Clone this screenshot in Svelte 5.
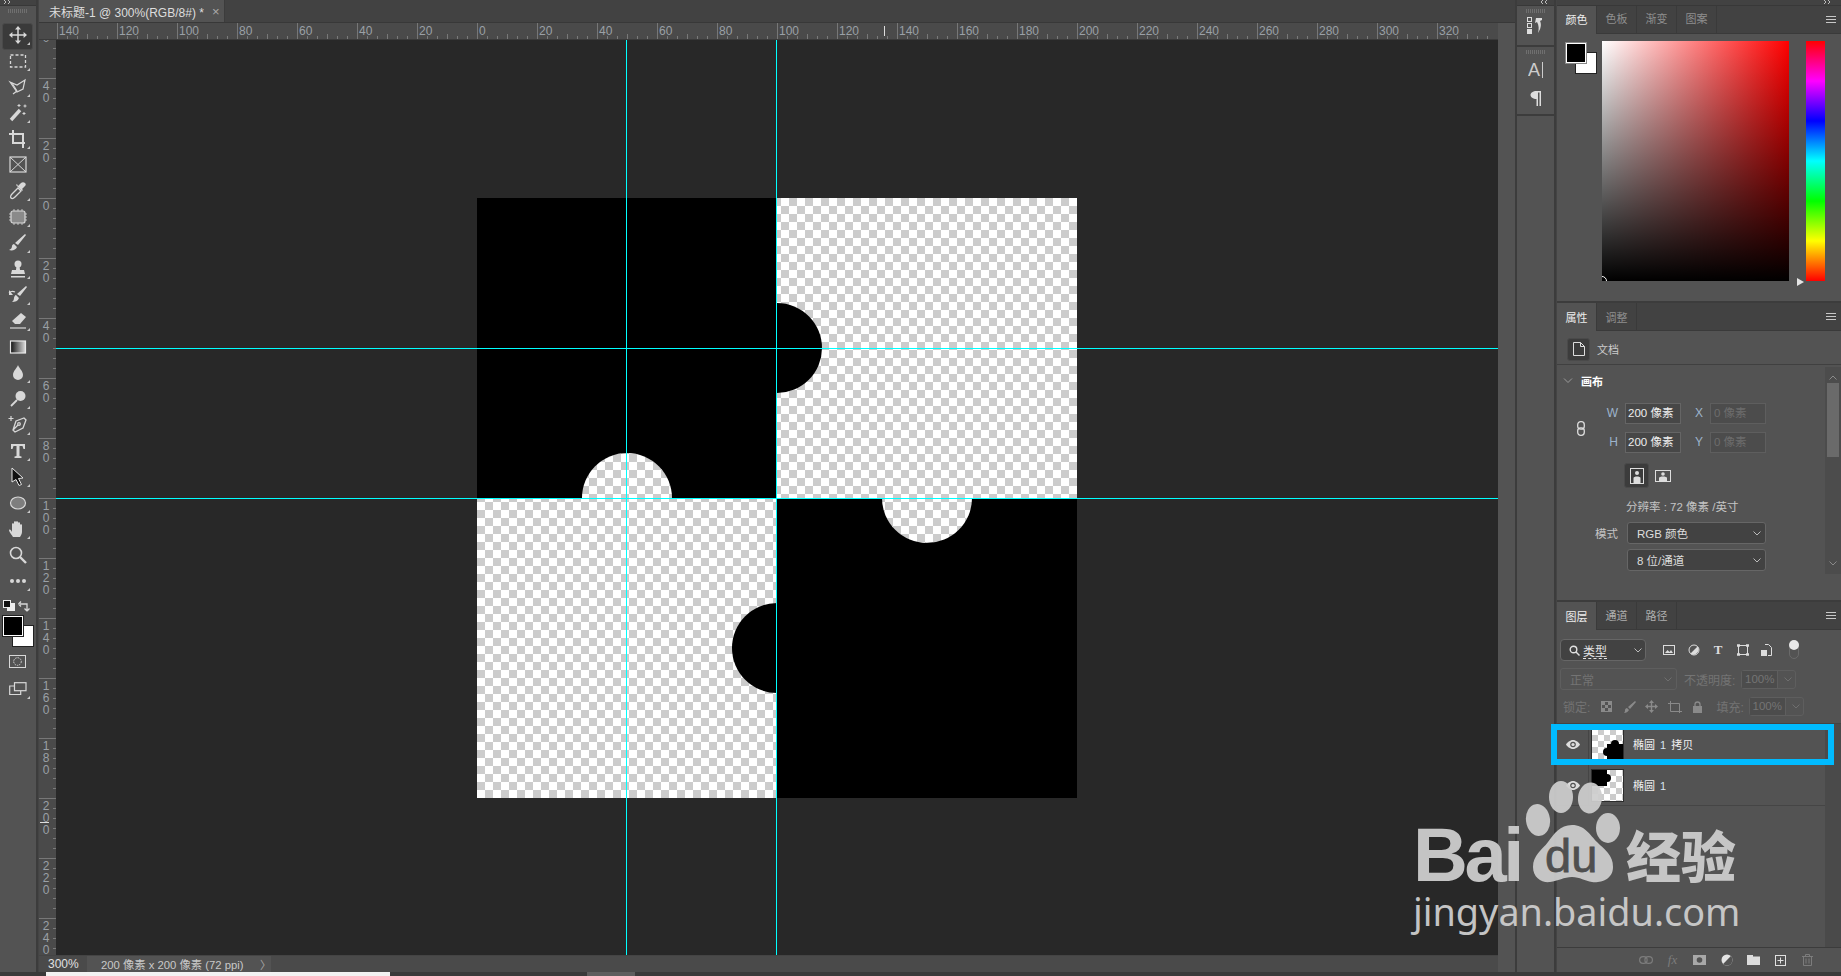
<script>
  const hLabels = [140,120,100,80,60,40,20,0,20,40,60,80,100,120,140,160,180,200,220,240,260,280,300,320];
  const vLabels = [60,40,20,0,20,40,60,80,100,120,140,160,180,200,220,240];
  const F = '#d8d8d8';
  const tools = [
    { active: true, tri: true, s: `<path d="M10 3v14M3 10h14" stroke-width="1.5"/><path fill="${F}" stroke="none" d="M10 1l3 3.4H7zM10 19l3-3.4H7zM1 10l3.4-3v6zM19 10l-3.4-3v6z"/>` },
    { tri: true, s: `<rect x="2.5" y="4" width="15" height="12" stroke-dasharray="3 2" stroke-width="1.3"/>` },
    { tri: true, s: `<path d="M2 5l7 3 8-5-2 9-6 3z" stroke-width="1.2"/><path d="M4 6l5 8-4 3" stroke-width="1.2"/>` },
    { tri: true, s: `<path d="M3 17l9-10" stroke-width="3.4"/><path stroke-width="1" d="M11 1v3M9.500 2.500h3M17 1.500v3M15.500 3h3M16 9v3M14.500 10.500h3"/>` },
    { tri: true, s: `<path d="M5 1v13h12M1 5h14v14" stroke-width="2"/>` },
    { tri: false, s: `<rect x="2" y="2" width="16" height="15" stroke-width="1.2"/><path d="M2 2l16 15M18 2L2 17" stroke-width="1"/>` },
    { tri: true, s: `<path d="M3 17c-1-1 0-3 1-4l6-6 3 3-6 6c-1 1-3 2-4 1z" stroke-width="1.300"/><path fill="${F}" stroke="none" d="M10 5l3-3c1-1 3-1 4 0s1 2 0 3l-3 3 1 1-1 1-6-6 1-1z"/>` },
    { tri: true, s: `<rect x="3" y="4" width="14" height="12" rx="2" fill="#8a8a8a" stroke-width="1.200"/><path stroke-width=".8" d="M6 2v2M10 2v2M14 2v2M6 16v2M10 16v2M14 16v2M1 7h2M1 10h2M1 13h2M17 7h2M17 10h2M17 13h2"/>` },
    { tri: true, s: `<path fill="${F}" stroke="none" d="M17 1l1 1-8 10-3-2zM6 11l3 3c-1 3-5 4-8 3 2-1 3-2 3-4 0-1 1-2 2-2z"/>` },
    { tri: true, s: `<circle cx="10" cy="5" r="3.500" fill="${F}" stroke="none"/><path fill="${F}" stroke="none" d="M8.500 7h3l.5 4h4l1 4H3l1-4h4zM3 17h14v1.500H3z"/>` },
    { tri: true, s: `<path fill="${F}" stroke="none" d="M18 1l1 1-7 9-3-2zM8 10l3 3c-1 3-4 4-7 4 1-1 2-2 2-4 0-1 1-3 2-3z"/><path stroke-width="1.200" d="M1 8c2-2 4-2 6-1"/><path fill="${F}" stroke="none" d="M1 5v5h4z"/>` },
    { tri: true, s: `<path fill="${F}" stroke="none" d="M13 2l5 4-6 7H7l-3-3z"/><path stroke-width="1.200" d="M2 17h16"/>` },
    { tri: false, s: `<defs><linearGradient id="tg"><stop offset="0" stop-color="#111"/><stop offset="1" stop-color="#ddd"/></linearGradient></defs><rect x="2.500" y="4" width="15" height="12" fill="url(#tg)" stroke="#e8e8e8" stroke-width="1.200"/>` },
    { tri: true, s: `<path fill="${F}" stroke="none" d="M10 2c1 3 5 6 5 10a5 5 0 0 1-10 0c0-4 4-7 5-10z"/>` },
    { tri: true, s: `<circle cx="12.500" cy="7" r="5" fill="${F}" stroke="none"/><path stroke-width="1.800" d="M9 11l-6 6"/>` },
    { tri: true, s: `<path stroke-width="1.300" d="M8 6l8-3 2 2-3 8-8 4-2-2zM5 15l5-5"/><circle cx="11" cy="9" r="1.300"/><path stroke-width="1.200" d="M3 1v5M0.500 3.500h5"/>` },
    { tri: true, s: `<path fill="${F}" stroke="none" d="M3 3h14v5h-1.500l-1-3H11.500v10l2 .5V17H6.500v-1.500l2-.5V5H5.500l-1 3H3z"/>` },
    { tri: true, s: `<path fill="#111" stroke="#e4e4e4" stroke-width="1" d="M4 1l11 10-4.500.5 3 6-2.500 1-3-6L4 15z"/>` },
    { tri: true, s: `<ellipse cx="10" cy="10" rx="7.500" ry="6" fill="#7e7e7e" stroke-width="1.200"/>` },
    { tri: true, s: `<path fill="${F}" stroke="none" d="M5 18c-1-2-4-5-4-7 1-1 2 0 3 2V5c0-1 2-1 2 0V3c0-1 2-1 2 0v0c0-1 2-1 2 0v1c0-1 2-1 2 0v2c0-1 2-1 2 0v7c0 2-1 3-2 5z"/>` },
    { tri: false, s: `<circle cx="8" cy="8" r="5.500" stroke-width="1.600"/><path stroke-width="2.400" d="M12 12l6 6"/>` },
    { tri: true, s: `<circle cx="4" cy="10" r="2" fill="${F}" stroke="none"/><circle cx="10" cy="10" r="2" fill="${F}" stroke="none"/><circle cx="16" cy="10" r="2" fill="${F}" stroke="none"/>` }
  ];
</script>

<div class="app">
  <div class="main">
    <aside class="tools">
      <div class="top-strip"><svg class="dbl" width="8" height="4" viewBox="0 0 8 4" fill="none" stroke="#bbb"><path d="M0 0l2 2-2 2M4 0l2 2-2 2"/></svg></div>
      <div class="grip tgrip"></div>
      <div class="toollist">
        {#each tools as t}
          <div class="tool" class:active={t.active} class:tri={t.tri}>
            <svg class="ico" width="20" height="20" viewBox="0 0 20 20">{@html t.s}</svg>
          </div>
        {/each}
      </div>
      <div class="mini">
        <svg width="13" height="11" viewBox="0 0 13 11"><rect x="4" y="3" width="8" height="8" fill="#eee"/><rect x="0.500" y="0.500" width="7" height="7" fill="#111" stroke="#eee"/></svg>
        <svg width="12" height="12" viewBox="0 0 12 12" fill="none" stroke="#d8d8d8" stroke-width="1.300"><path d="M2 4h7v6M0.500 4L3 1.500M0.500 4L3 6.500M9 11l-2.500-2.500M9 11l2.500-2.500"/></svg>
      </div>
      <div class="swatch tswatch"><i class="bg"></i><i class="fg"></i></div>
      <div class="tool qm">
        <svg width="18" height="14" viewBox="0 0 18 14" fill="none" stroke="#d8d8d8"><rect x="0.500" y="0.500" width="16" height="12"/><circle cx="8.500" cy="6.500" r="3.800" stroke-dasharray="1.500 1"/></svg>
      </div>
      <div class="tool tri">
        <svg width="18" height="14" viewBox="0 0 18 14" fill="none" stroke="#d8d8d8" stroke-width="1.200"><rect x="5.500" y="0.700" width="11.500" height="8"/><path d="M5.500 4H0.700v8.500h11V9"/></svg>
      </div>
    </aside>
    <div class="sep"></div>

    <section class="doc">
      <div class="tabbar">
        <div class="doctab"><span>未标题-1 @ 300%(RGB/8#) *</span><b>×</b></div>
      </div>
      <div class="hruler">
        <div class="corner"></div>
        {#each hLabels as l}<div class="hcell"><span>{l}</span></div>{/each}
        <i class="hmark"></i>
      </div>
      <div class="mid">
        <div class="vruler">
          <div class="vtrack">
            {#each vLabels as l, i}
              <div class="vcell">
                {#each String(l).split('') as d}<span>{d}</span>{/each}
                {#if l === 200}<i class="vmark"></i>{/if}
              </div>
            {/each}
          </div>
        </div>
        <div class="canvas">
          <svg class="art" width="600" height="600" viewBox="0 0 600 600">
            <defs>
              <pattern id="chk" width="16" height="16" patternUnits="userSpaceOnUse">
                <rect width="16" height="16" fill="#fff"/>
                <rect x="8" width="8" height="8" fill="#ccc"/>
                <rect y="8" width="8" height="8" fill="#ccc"/>
              </pattern>
              <clipPath id="tl"><rect width="300" height="300"/></clipPath>
              <clipPath id="br"><rect x="300" y="300" width="300" height="300"/></clipPath>
            </defs>
            <rect width="600" height="600" fill="url(#chk)"/>
            <rect width="300" height="300" fill="#000"/>
            <rect x="300" y="300" width="300" height="300" fill="#000"/>
            <circle cx="300" cy="150" r="45" fill="#000"/>
            <circle cx="300" cy="450" r="45" fill="#000"/>
            <circle cx="150" cy="300" r="45" fill="url(#chk)" clip-path="url(#tl)"/>
            <circle cx="450" cy="300" r="45" fill="url(#chk)" clip-path="url(#br)"/>
          </svg>
          <i class="gh g1"></i><i class="gh g2"></i><i class="gv g3"></i><i class="gv g4"></i>
        </div>
      </div>
      <div class="status">
        <span class="zoomv">300%</span>
        <div class="info"><span>200 像素 x 200 像素 (72 ppi)</span><em>〉</em></div>
      </div>
    </section>

    <div class="gutter"><div class="gutter-top"></div></div>
    <div class="sep2"></div>

    <div class="dock">
      <div class="top-strip"><svg class="dbl r" width="8" height="4" viewBox="0 0 8 4" fill="none" stroke="#bbb"><path d="M2 0L0 2l2 2M6 0L4 2l2 2"/></svg></div>
      <div class="dsec h1">
        <div class="grip"></div>
        <svg width="18" height="18" viewBox="0 0 18 18"><g fill="none" stroke="#ddd"><rect x="0.500" y="0.500" width="4" height="4"/><rect x="0.500" y="6.500" width="4" height="4"/></g><rect y="12" width="5" height="5" fill="#ddd"/><path fill="#ddd" d="M9 1h6v2l-2 1c1 2 2 6-2 12 1-4 1-8-1-11l-2 1z"/></svg>
      </div>
      <div class="dsec h2">
        <div class="grip"></div>
        <svg width="16" height="18" viewBox="0 0 16 18"><text x="0" y="15" class="a">A</text><path d="M14.500 1v16" stroke="#ccc"/></svg>
        <svg class="para" width="12" height="16" viewBox="0 0 12 16"><path fill="#ddd" d="M11 1v15h-1.500V2.500H8V16H6.500V9C3 9 .5 7 .5 5S3 1 6.500 1z"/></svg>
      </div>
    </div>
    <div class="sep"></div>

    <div class="panels">
      <div class="top-strip"><svg class="dbl r2" width="8" height="4" viewBox="0 0 8 4" fill="none" stroke="#bbb"><path d="M0 0l2 2-2 2M4 0l2 2-2 2"/></svg></div>

      <section class="panel color">
        <div class="tabs">
          <span class="tab on">颜色</span><span class="tab">色板</span><span class="tab">渐变</span><span class="tab">图案</span>
          <svg class="menu" width="10" height="7" viewBox="0 0 10 7"><path d="M0 .5h10M0 3.500h10M0 6.500h10" stroke="#c8c8c8"/></svg>
        </div>
        <div class="colorbody">
          <div class="swatch cswatch"><i class="bg"></i><i class="fg"></i></div>
          <div class="picker"><i class="pt"></i></div>
          <div class="hue"><i class="ha"></i></div>
        </div>
      </section>

      <section class="panel props">
        <div class="tabs"><span class="tab on">属性</span><span class="tab">调整</span>
          <svg class="menu" width="10" height="7" viewBox="0 0 10 7"><path d="M0 .5h10M0 3.500h10M0 6.500h10" stroke="#c8c8c8"/></svg>
        </div>
        <div class="docrow">
          <div class="docbtn"><svg width="12" height="14" viewBox="0 0 12 14" fill="none" stroke="#ddd"><path d="M.5.500h7l4 4v9H.5zM7.500.500v4h4"/></svg></div>
          <span>文档</span>
        </div>
        <div class="propbody">
          <div class="propcontent">
            <div class="ttl"><svg width="10" height="6" viewBox="0 0 10 6" fill="none" stroke="#9a9a9a"><path d="M1 .5l4 4 4-4"/></svg><b>画布</b></div>
            <div class="dims">
              <div class="link"><svg width="8" height="15" viewBox="0 0 8 15" fill="none" stroke="#ddd" stroke-width="1.300"><rect x=".7" y=".7" width="6.600" height="7.500" rx="3"/><rect x=".7" y="6.800" width="6.600" height="7.500" rx="3"/></svg></div>
              <div class="dimgrid">
                <label>W</label><div class="inp">200 像素</div><label>X</label><div class="inp off">0 像素</div>
                <label>H</label><div class="inp">200 像素</div><label>Y</label><div class="inp off">0 像素</div>
              </div>
            </div>
            <div class="orient">
              <div class="obtn"><svg width="14" height="16" viewBox="0 0 14 16"><rect x=".5" y=".5" width="13" height="15" fill="none" stroke="#ddd"/><circle cx="7" cy="5" r="2" fill="#ddd"/><path fill="#ddd" d="M3.500 15V10c0-2 7-2 7 0v5z"/></svg></div>
              <svg width="16" height="12" viewBox="0 0 16 12"><rect x=".5" y=".5" width="15" height="11" fill="none" stroke="#ddd"/><circle cx="8" cy="4" r="1.800" fill="#ddd"/><path fill="#ddd" d="M4 11V8c0-2 8-2 8 0v3z"/></svg>
            </div>
            <div class="res">分辨率 : 72 像素 /英寸</div>
            <div class="moderow"><span>模式</span><div class="sel">RGB 颜色<svg width="8" height="5" viewBox="0 0 8 5" fill="none" stroke="#bbb"><path d="M.5.500L4 4 7.500.500"/></svg></div></div>
            <div class="moderow second"><span></span><div class="sel">8 位/通道<svg width="8" height="5" viewBox="0 0 8 5" fill="none" stroke="#bbb"><path d="M.5.500L4 4 7.500.500"/></svg></div></div>
          </div>
          <div class="scroll">
            <svg width="8" height="5" viewBox="0 0 8 5" fill="none" stroke="#8a8a8a"><path d="M.5 4.500L4 1l3.500 3.500"/></svg>
            <i></i>
            <svg class="dn" width="8" height="5" viewBox="0 0 8 5" fill="none" stroke="#8a8a8a"><path d="M.5.500L4 4 7.500.500"/></svg>
          </div>
        </div>
      </section>

      <section class="panel layers">
        <div class="tabs"><span class="tab on">图层</span><span class="tab lit">通道</span><span class="tab lit">路径</span>
          <svg class="menu" width="10" height="7" viewBox="0 0 10 7"><path d="M0 .5h10M0 3.500h10M0 6.500h10" stroke="#c8c8c8"/></svg>
        </div>
        <div class="filter">
          <div class="fsel">
            <svg width="11" height="11" viewBox="0 0 11 11" fill="none" stroke="#e0e0e0" stroke-width="1.400"><circle cx="4.500" cy="4.500" r="3.300"/><path d="M7 7l3.500 3.500"/></svg>
            <u>类型</u>
            <svg class="car" width="8" height="5" viewBox="0 0 8 5" fill="none" stroke="#bbb"><path d="M.5.500L4 4 7.500.500"/></svg>
          </div>
          <div class="ficons">
            <svg width="12" height="11" viewBox="0 0 12 11"><rect x=".5" y=".5" width="11" height="9" fill="none" stroke="#ddd"/><path fill="#ddd" d="M2 8l2.500-3 2 2 1.500-2 2 3z"/></svg>
            <svg width="12" height="12" viewBox="0 0 12 12"><circle cx="6" cy="6" r="5" fill="none" stroke="#ddd"/><path fill="#ddd" d="M9.500 2.500a5 5 0 0 1-7 7z"/></svg>
            <span class="ft">T</span>
            <svg width="12" height="12" viewBox="0 0 12 12" fill="none" stroke="#ddd"><rect x="1.500" y="1.500" width="9" height="9"/><path stroke-width="2.400" d="M0 1.500h3M9 1.500h3M0 10.500h3M9 10.500h3"/></svg>
            <svg width="11" height="12" viewBox="0 0 11 12"><path fill="none" stroke="#ddd" d="M4 .5h3.500l3 3v8H7"/><rect y="6" width="6" height="6" fill="#ddd"/></svg>
            <div class="toggle"><i></i></div>
          </div>
        </div>
        <div class="blend">
          <div class="bsel">正常<svg width="8" height="5" viewBox="0 0 8 5" fill="none" stroke="#6f6f6f"><path d="M.5.500L4 4 7.500.500"/></svg></div>
          <span class="dim">不透明度:</span>
          <div class="pct"><b>100%</b><svg width="8" height="5" viewBox="0 0 8 5" fill="none" stroke="#6f6f6f"><path d="M.5.500L4 4 7.500.500"/></svg></div>
        </div>
        <div class="lock">
          <span class="dim lk">锁定:</span>
          <svg class="l1" width="11" height="11" viewBox="0 0 11 11"><rect x=".5" y=".5" width="10" height="10" fill="none" stroke="#8a8a8a"/><path fill="#8a8a8a" d="M1 1h3v3H1zM7 1h3v3H7zM4 4h3v3H4zM1 7h3v3H1zM7 7h3v3H7z"/></svg>
          <svg class="l2" width="12" height="12" viewBox="0 0 12 12"><path fill="#8a8a8a" d="M11 0l1 1-6 7-2-2zM3 7l2 2c-1 2-3 3-5 3 1-1 1-2 1-3 0-1 1-2 2-2z"/></svg>
          <svg class="l3" width="13" height="13" viewBox="0 0 13 13"><path fill="#8a8a8a" d="M6.500 0l2.500 3H7.200v2.800H10V4l3 2.500L10 9V7.200H7.200V10H9l-2.500 3L4 10h1.800V7.200H3V9L0 6.500 3 4v1.800h2.800V3H4z"/></svg>
          <svg class="l4" width="14" height="12" viewBox="0 0 14 12" fill="none" stroke="#8a8a8a"><path d="M2.500 2.500h9v8h-9zM0 2.500h5M2.500 0v2M9 10.500h5M11.500 10v2"/></svg>
          <svg class="l5" width="11" height="12" viewBox="0 0 11 12"><path fill="none" stroke="#8a8a8a" stroke-width="1.300" d="M3 5V3.500a2.500 2.500 0 0 1 5 0V5"/><path fill="#8a8a8a" d="M1 5h9v7H1z"/></svg>
          <span class="dim fl">填充:</span>
          <div class="pct"><b>100%</b><svg width="8" height="5" viewBox="0 0 8 5" fill="none" stroke="#6f6f6f"><path d="M.5.500L4 4 7.500.500"/></svg></div>
        </div>
        <div class="list">
          <div class="lrow">
            <div class="eye"><svg width="14" height="9" viewBox="0 0 14 9"><path fill="#ddd" d="M7 0c3 0 6 2.500 7 4.500C13 6.500 10 9 7 9S1 6.500 0 4.500C1 2.500 4 0 7 0z"/><circle cx="7" cy="4.500" r="2.800" fill="#535353"/><circle cx="7" cy="4.500" r="1.600" fill="#ddd"/></svg></div>
            <svg class="thumb" width="31" height="30" viewBox="0 0 31 30">
              <defs><pattern id="tc" width="12" height="12" patternUnits="userSpaceOnUse"><rect width="12" height="12" fill="#fff"/><rect x="6" width="6" height="6" fill="#ccc"/><rect y="6" width="6" height="6" fill="#ccc"/></pattern></defs>
              <rect width="31" height="30" fill="url(#tc)"/><path d="M15 15h16v15H15z"/><circle cx="15" cy="23" r="4"/><circle cx="23" cy="15" r="4" fill="#000"/><path fill="#000" d="M15 15h16v15H15z"/>
            </svg>
            <span class="lname">椭圆 <s>1</s> 拷贝</span>
          </div>
          <div class="lrow">
            <div class="eye"><svg width="14" height="9" viewBox="0 0 14 9"><path fill="#ddd" d="M7 0c3 0 6 2.500 7 4.500C13 6.500 10 9 7 9S1 6.500 0 4.500C1 2.500 4 0 7 0z"/><circle cx="7" cy="4.500" r="2.800" fill="#535353"/><circle cx="7" cy="4.500" r="1.600" fill="#ddd"/></svg></div>
            <svg class="thumb" width="31" height="31" viewBox="0 0 31 31">
              <rect width="31" height="31" fill="url(#tc)"/><path d="M0 0h15v16H0z"/><circle cx="15" cy="8" r="4"/>
            </svg>
            <span class="lname">椭圆 <s>1</s></span>
          </div>
          <div class="hilite"></div>
        </div>
        <div class="lfoot">
          <svg width="14" height="8" viewBox="0 0 14 8" fill="none" stroke="#7c7c7c" stroke-width="1.200"><rect x=".6" y=".6" width="7.500" height="6.800" rx="3.400"/><rect x="5.900" y=".6" width="7.500" height="6.800" rx="3.400"/></svg>
          <span class="fx">fx</span>
          <svg width="13" height="10" viewBox="0 0 13 10"><rect width="13" height="10" fill="#a8a8a8"/><circle cx="6.500" cy="5" r="2.800" fill="#535353"/></svg>
          <svg width="12" height="12" viewBox="0 0 12 12"><circle cx="6" cy="6" r="5.500" fill="#e4e4e4"/><path fill="#535353" d="M9.900 2.100a5.500 5.500 0 0 1-7.800 7.800z"/></svg>
          <svg width="13" height="10" viewBox="0 0 13 10"><path fill="#dcdcdc" d="M0 0h6v1.500h7V10H0z"/></svg>
          <svg width="11" height="11" viewBox="0 0 11 11"><rect x=".5" y=".5" width="10" height="10" fill="none" stroke="#e0e0e0"/><path stroke="#e0e0e0" d="M5.500 2.500v6M2.500 5.500h6"/></svg>
          <svg width="11" height="12" viewBox="0 0 11 12" fill="none" stroke="#7c7c7c"><path d="M0 2.500h11M3.500 2.500V.5h4v2M1.500 2.500v9h8v-9M4 4.500v5M7 4.500v5"/></svg>
        </div>
      </section>
    </div>
  </div>

  <div class="bottom"><i class="b1"></i><i class="b2"></i></div>

  <div class="wm">
    <svg width="441" height="196" viewBox="0 0 441 196">
      <g fill="#cdcdcd" fill-opacity=".93">
        <ellipse cx="138" cy="40" rx="12" ry="16" transform="rotate(-8 138 40)"/>
        <ellipse cx="161" cy="17" rx="12" ry="16"/>
        <ellipse cx="190" cy="18" rx="12" ry="15.500" transform="rotate(6 190 18)"/>
        <ellipse cx="208" cy="48" rx="12" ry="15"/>
        <path d="M172 45C185 45 190 55 197 62C205 70 213 75 213 87C213 100 200 103 192 102C185 101 180 97 172 97C164 97 158 101 150 102C142 103 133 98 133 87C133 75 142 70 148 62C154 54 160 45 172 45Z"/>
      </g>
    </svg>
    <span class="wbai">Bai</span>
    <span class="wdu">du</span>
    <span class="wjy">经验</span>
    <span class="wurl">jingyan.baidu.com</span>
  </div>
</div>

<style>
  :global(body) { margin: 0; background: #3a3a3a; overflow: hidden; }
  * { box-sizing: border-box; }
  i, em, s, u { font-style: normal; text-decoration: none; }
  .app { position: relative; width: 1841px; height: 976px; overflow: hidden; background: #3a3a3a; color: #ddd;
    font-family: "Liberation Sans", "Noto Sans CJK SC", sans-serif; font-size: 11.5px; }
  .main { display: flex; height: 972px; }
  .top-strip { height: 6px; background: #424242; border-bottom: 1px solid #383838; position: relative; overflow: visible; }
  .dbl { position: absolute; top: 0; left: 4px; }
  .dbl.r { left: 24px; }
  .dbl.r2 { left: 267px; }

  /* tool column */
  .tools { width: 36px; background: #535353; flex: none; }
  .grip { height: 4px; margin: 0 auto; width: 20px;
    background: repeating-linear-gradient(90deg, #6f6f6f 0 1px, transparent 1px 2px); }
  .tgrip { margin-top: 3px; margin-bottom: 9px; }
  .toollist { display: flex; flex-direction: column; }
  .tool { height: 26px; width: 36px; display: flex; align-items: center; justify-content: center; position: relative; }
  .ico { fill: none; stroke: #d8d8d8; stroke-width: 1.3; }
  .tool.active::before { content: ""; position: absolute; inset: 1px 3px 0 2px; height: 25px; background: #3a3a3a; border: 1px solid #4a4a4a; border-radius: 3px; }
  .tool svg { position: relative; }
  .tool.tri::after { content: ""; position: absolute; right: 6px; bottom: 3px; border-style: solid; border-width: 0 0 3px 3px; border-color: transparent transparent #c8c8c8 transparent; }
  .mini { display: flex; justify-content: space-between; padding: 0 6px 0 3px; margin-top: 6px; height: 13px; }
  .swatch { position: relative; }
  .swatch .fg, .swatch .bg { position: absolute; display: block; width: 20px; height: 20px; }
  .swatch .fg { left: 0; top: 0; background: #000; border: 1.500px solid #fff; outline: 1px solid #222; }
  .swatch .bg { left: 10px; top: 10px; background: #fff; outline: 1px solid #222; }
  .tswatch { margin: 3px 0 0 3px; height: 30px; }
  .qm { margin-top: 3px; margin-bottom: 1px; }

  .sep { width: 3px; background: linear-gradient(90deg, #3c3c3c 0 2px, #444 2px); flex: none; }
  .sep2 { width: 2px; background: #3c3c3c; flex: none; }

  /* document */
  .doc { width: 1459px; flex: none; display: flex; flex-direction: column; }
  .tabbar { height: 23px; background: #424242; border-bottom: 1px solid #383838; flex: none; padding-top: 0; }
  .doctab { width: 186px; height: 22px; background: #535353; display: flex; align-items: center; padding-left: 10px; color: #ddd; font-size: 12px; gap: 8px; border-right: 1px solid #3c3c3c; }
  .doctab b { font-weight: 400; color: #aaa; font-size: 13px; }
  .hruler { height: 17px; display: flex; background: #4a4a4a; flex: none; position: relative; overflow: hidden; border-bottom: 1px solid #3a3a3a; }
  .corner { width: 18px; flex: none; background: #4a4a4a; }
  .hcell { width: 60px; flex: none; border-left: 1px solid #777; color: #9aa0a6; font-size: 12px; line-height: 14px; padding-left: 1px; padding-top: 1px;
    background:
      repeating-linear-gradient(90deg, transparent 0 9px, #7a7a7a 9px 10px) 0 100%/100% 3px no-repeat,
      linear-gradient(#777, #777) 29px 100%/1px 5px no-repeat; }
  .hmark { position: absolute; left: 845px; top: 3px; width: 1px; height: 10px; background: #ddd; }
  .mid { flex: 1; display: flex; min-height: 0; }
  .vruler { width: 17px; background: #4a4a4a; overflow: hidden; flex: none; }
  .vtrack { margin-top: -22px; }
  .vcell { height: 60px; border-top: 1px solid #777; color: #9aa0a6; font-size: 12px; line-height: 12px; padding: 1px 0 0 1px; position: relative; display: flex; flex-direction: column;
    background:
      repeating-linear-gradient(180deg, transparent 0 9px, #7a7a7a 9px 10px) 100% 0/3px 100% no-repeat; }
  .vcell span { display: block; width: 12px; text-align: center; }
  .vmark { position: absolute; left: 1px; top: 23px; width: 9px; height: 1px; background: #ddd; }
  .canvas { flex: 1; background: #282828; position: relative; display: flex; align-items: center; justify-content: center; overflow: hidden; }
  .art { display: block; }
  .gh { position: absolute; left: 0; right: 0; height: 1px; background: #0ff; }
  .gv { position: absolute; top: 0; bottom: 0; width: 1px; background: #0ff; }
  .g1 { top: 308px; } .g2 { top: 458px; }
  .g3 { left: 570px; } .g4 { left: 720px; }
  .status { height: 17px; background: #4a4a4a; display: flex; align-items: center; flex: none; font-size: 12px; border-top: 1px solid #444; }
  .zoomv { width: 48px; padding-left: 9px; color: #e0e0e0; flex: none; }
  .info { width: 184px; height: 16px; background: #535353; display: flex; align-items: center; padding-left: 14px; color: #c8c8c8; font-size: 11.3px; }
  .info span { width: 159px; flex: none; white-space: nowrap; }
  .info em { color: #aaa; font-size: 11px; }

  .gutter { width: 17px; background: #535353; flex: none; }
  .gutter-top { height: 23px; background: #424242; border-bottom: 1px solid #383838; }

  .dock { width: 37px; background: #535353; flex: none; }
  .dsec { display: flex; flex-direction: column; align-items: center; border-bottom: 2px solid #3c3c3c; padding-top: 3px; }
  .h1 { height: 41px; gap: 4px; }
  .h2 { height: 69px; gap: 7px; }
  .a { font: 18px "Liberation Sans", sans-serif; fill: #ccc; }
  .para { margin-top: 4px; }

  /* panels */
  .panels { width: 284px; flex: none; background: #535353; display: flex; flex-direction: column; }
  .panel { border-bottom: 2px solid #3c3c3c; flex: none; display: flex; flex-direction: column; }
  .tabs { height: 28px; background: #424242; display: flex; position: relative; flex: none; border-bottom: 1px solid #3a3a3a; }
  .tab { width: 40px; display: flex; align-items: center; justify-content: center; color: #8f8f8f; font-size: 11px; border-right: 1px solid #3a3a3a; }
  .tab.on { background: #535353; color: #eee; height: 28px; }
  .tab.lit { color: #b0b0b0; }
  .color .tab { padding-bottom: 3px; }
  .layers .tab { padding-bottom: 1px; }
  .menu { position: absolute; right: 5px; top: 10px; }

  .color { height: 297px; }
  .colorbody { display: flex; padding: 7px 0 0 9px; }
  .cswatch { width: 36px; height: 40px; margin-top: 2px; flex: none; }
  .cswatch .fg { outline-color: #888; }
  .picker { width: 187px; height: 240px; flex: none; position: relative;
    background: linear-gradient(to top, #000, transparent), linear-gradient(to right, #fff, #f00); }
  .pt { position: absolute; left: -5px; bottom: -5px; width: 10px; height: 10px; border: 1px solid #fff; border-radius: 50%; clip-path: inset(0 0 5px 5px); }
  .hue { width: 19px; height: 240px; margin-left: 17px; flex: none; position: relative;
    background: linear-gradient(to bottom, #f00, #f0f 16.7%, #00f 33.3%, #0ff 50%, #0f0 66.7%, #ff0 83.3%, #f00); }
  .ha { position: absolute; left: -9px; bottom: -5px; border-style: solid; border-width: 4px 0 4px 7px; border-color: transparent transparent transparent #e4e4e4; }

  .props { height: 299px; }
  .docrow { height: 34px; display: flex; align-items: center; gap: 7px; padding: 3px 0 0 10px; border-bottom: 1px solid #404040; flex: none; color: #ccc; font-size: 11px; }
  .docbtn { width: 23px; height: 23px; background: #3c3c3c; border: 1px solid #4a4a4a; border-radius: 3px; display: flex; align-items: center; justify-content: center; }
  .propbody { display: flex; flex: 1; min-height: 0; }
  .propcontent { width: 268px; flex: none; }
  .ttl { display: flex; align-items: center; gap: 8px; padding: 7px 0 0 6px; height: 25px; }
  .ttl b { font-size: 11px; color: #fff; font-weight: 700; }
  .dims { display: flex; margin-top: 13px; }
  .link { width: 47px; flex: none; display: flex; align-items: center; justify-content: center; }
  .dimgrid { display: grid; column-gap: 0; row-gap: 8px; grid-template-columns: 14px 7px 56px 22px 7px 56px; }
  .dimgrid label { text-align: right; line-height: 21px; color: #9db4cc; font-size: 12px; }
  .dimgrid .inp { grid-column: 3; }
  .dimgrid label:nth-child(1), .dimgrid label:nth-child(5) { grid-column: 1; }
  .dimgrid label:nth-child(3), .dimgrid label:nth-child(7) { grid-column: 4; }
  .dimgrid .inp.off { grid-column: 6; }
  .inp { height: 21px; background: #474747; border: 1px solid #656565; line-height: 19px; padding-left: 2px; color: #eee; white-space: nowrap; font-size: 11.5px; }
  .inp.off { color: #6c6c6c; background: #4c4c4c; border-color: #5e5e5e; padding-left: 3px; }
  .orient { display: flex; align-items: center; gap: 6px; margin: 10px 0 0 67px; }
  .obtn { width: 25px; height: 25px; background: #3c3c3c; border: 1px solid #4a4a4a; border-radius: 3px; display: flex; align-items: center; justify-content: center; }
  .res { margin: 11px 0 0 69px; line-height: 16px; color: #c4c4c4; font-size: 11.5px; }
  .moderow { display: flex; align-items: center; margin-top: 7px; padding-left: 38px; color: #c4c4c4; }
  .moderow span { width: 32px; flex: none; font-size: 11.5px; }
  .moderow.second { margin-top: 5px; }
  .sel { width: 139px; height: 22px; border: 1px solid #666; border-radius: 3px; background: #424242; display: flex; align-items: center; justify-content: space-between; padding: 0 4px 0 9px; color: #ddd; font-size: 11.5px; }
  .scroll { width: 16px; height: 207px; margin-top: 2px; background: #4c4c4c; display: flex; flex-direction: column; align-items: center; padding-top: 8px; }
  .scroll i { display: block; width: 12px; height: 74px; background: #6a6a6a; margin-top: 3px; }
  .scroll .dn { margin-top: auto; margin-bottom: 8px; }

  .layers { flex: 1; border-bottom: 0; }
  .filter { display: flex; align-items: center; margin: 9px 0 0 3px; height: 22px; flex: none; }
  .fsel { width: 86px; height: 22px; background: #424242; border: 1px solid #666; border-radius: 4px; display: flex; align-items: center; padding-left: 8px; gap: 3px; position: relative; color: #e4e4e4; font-size: 12px; }
  .fsel u { text-decoration: underline dashed; text-underline-offset: 2px; }
  .car { position: absolute; right: 3px; top: 8px; }
  .ficons { display: flex; align-items: center; margin-left: 17px; }
  .ficons > * { flex: none; margin-right: 12.500px; }
  .ft { font: 700 13px "Liberation Serif", serif; color: #ddd; width: 12px; text-align: center; }
  .toggle { width: 10px; height: 18px; border: 1px solid #6a6a6a; border-radius: 5px; position: relative; margin-left: 4px; }
  .toggle i { position: absolute; left: -1px; top: -2px; width: 10px; height: 10px; border-radius: 50%; background: #e8e8e8; }
  .blend { display: flex; align-items: center; margin: 7px 0 0 3px; height: 22px; flex: none; }
  .bsel { width: 117px; height: 22px; border: 1px solid #5e5e5e; border-radius: 3px; display: flex; align-items: center; justify-content: space-between; padding: 0 4px 0 9px; color: #747474; font-size: 12px; }
  .dim { color: #747474; font-size: 12px; }
  .blend .dim { margin: 0 2px 0 7px; width: 55px; white-space: nowrap; }
  .pct { width: 55px; height: 19px; border: 1px solid #5e5e5e; border-radius: 3px; display: flex; align-items: center; justify-content: space-between; padding-right: 3px; }
  .pct b { font-weight: 400; width: 36px; height: 17px; background: #4c4c4c; border-right: 1px solid #5e5e5e; color: #747474; font-size: 11.5px; line-height: 17px; padding-left: 3px; }
  .lock { display: flex; align-items: center; height: 19px; margin-top: 7px; flex: none; padding-left: 6px; }
  .lk { width: 38px; }
  .l2 { margin-left: 12px; }
  .l3 { margin-left: 8.500px; }
  .l4 { margin-left: 10px; }
  .l5 { margin-left: 10px; }
  .fl { margin-left: 14px; width: 32px; }
  .list { position: relative; margin-top: 7px; border-top: 1px solid #444; flex: 1; background: linear-gradient(90deg, #535353 0 268px, #4a4a4a 268px); }
  .lrow { width: 268px; height: 41px; display: flex; align-items: center; border-bottom: 1px solid #454545; }
  .eye { width: 32px; height: 100%; flex: none; border-right: 1px solid #454545; display: flex; align-items: center; justify-content: center; margin-right: 3px; }
  .thumb { flex: none; outline: 1px solid #2c2c2c; }
  .lname { margin-left: 10px; color: #f0f0f0; font-size: 11px; white-space: nowrap; }
  .lname s { color: #d8e4f0; margin: 0 2px; font-size: 11px; }
  .hilite { position: absolute; left: -6px; top: 0; width: 283px; height: 41px; border: 6px solid #00bbff; }
  .lfoot { height: 25px; border-top: 1px solid #3c3c3c; display: grid; grid-auto-flow: column; grid-auto-columns: 27px; justify-content: start; justify-items: center; align-items: center; flex: none; padding-left: 75px; background: #535353; }
  .fx { font: italic 13px "Liberation Serif", serif; color: #7c7c7c; }

  .bottom { height: 4px; background: #3a3a3a; position: relative; display: flex; }
  .b1 { margin-left: 46px; width: 344px; background: #f2f2f2; display: block; }
  .b2 { margin-left: 197px; width: 48px; background: #5e5e5e; display: block; }

  /* watermark */
  .wm { position: absolute; left: 1400px; top: 780px; width: 441px; height: 196px; pointer-events: none; color: #cdcdcd; }
  .wm svg { position: absolute; left: 0; top: 0; }
  .wm span { position: absolute; white-space: nowrap; line-height: 1; opacity: .95; }
  .wbai { left: 13px; top: 37px; font: 700 76px/1 "Liberation Sans", sans-serif; letter-spacing: -3.5px; }
  .wdu { left: 145px; top: 52px; font: 400 47px/1 "Liberation Sans", sans-serif; color: #4f4f4f; -webkit-text-stroke: .8px #4f4f4f; opacity: 1 !important; }
  .wjy { left: 226px; top: 46px; font: 900 55px/1 "Noto Sans CJK SC", sans-serif; }
  .wurl { left: 13px; top: 113px; font: 400 37.800px/1 "Noto Sans", sans-serif; }
</style>
